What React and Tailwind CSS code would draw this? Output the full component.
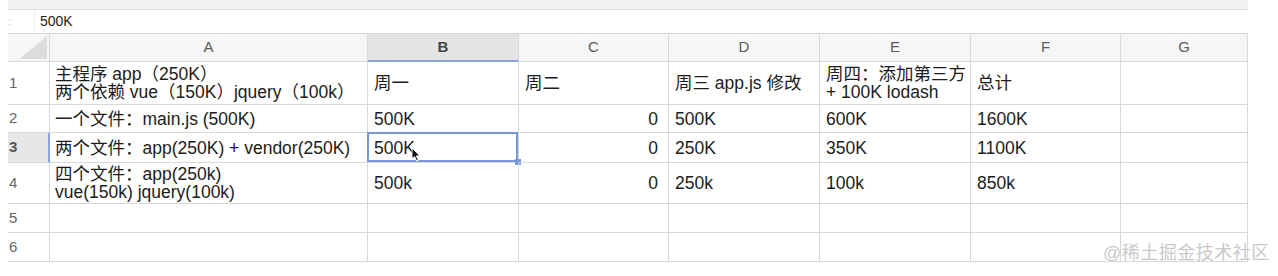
import React from "react";

const COLS = ["A", "B", "C", "D", "E", "F", "G"];

const ROWS = [
  {
    h: "h-[43px]",
    cells: [
      ["主程序 app（250K）", "两个依赖 vue（150K）jquery（100k）"],
      "周一",
      "周二",
      "周三 app.js 修改",
      ["周四：添加第三方", "+ 100K lodash"],
      "总计",
      "",
    ],
  },
  {
    h: "h-[28px]",
    cells: ["一个文件：main.js (500K)", "500K", "0", "500K", "600K", "1600K", ""],
  },
  {
    h: "h-[30px]",
    selected: true,
    cells: ["两个文件：app(250K) + vendor(250K)", "500K", "0", "250K", "350K", "1100K", ""],
  },
  {
    h: "h-[41px]",
    cells: [["四个文件：app(250k)", "vue(150k) jquery(100k)"], "500k", "0", "250k", "100k", "850k", ""],
  },
  { h: "h-[29px]", cells: ["", "", "", "", "", "", ""] },
  { h: "h-[29px]", cells: ["", "", "", "", "", "", ""] },
];

function Cursor() {
  return (
    <svg className="absolute left-[43px] top-[14px]" width="11" height="15" viewBox="0 0 11 15">
      <path d="M1 1 L1 12 L3.6 9.6 L5.6 14 L7.4 13.2 L5.4 8.9 L9 8.9 Z" fill="#111" stroke="#fff" strokeWidth="1" strokeLinejoin="round" />
    </svg>
  );
}

function Cell({ value, colIdx, row, rowIdx }) {
  const isSelected = row.selected && colIdx === 1;
  const rightAlign = colIdx === 2 && rowIdx > 0 && value !== "";
  const lines = Array.isArray(value) ? value : [value];
  return (
    <div
      className={`relative flex items-center border-r border-b border-[#d8d8d8] ${row.h} ${
        rightAlign ? "justify-end pr-[10px]" : colIdx === 0 ? "pl-[5px]" : "pl-[6px]"
      }`}
    >
      <div className="leading-[18px] whitespace-nowrap">
        {lines.map((l, i) => (
          <div key={i}>{l}</div>
        ))}
      </div>
      {isSelected && (
        <>
          <div className="absolute -left-[1px] -top-[1px] right-0 bottom-0 border-2 border-[#7896da]" />
          <div className="absolute -right-[3px] -bottom-[3px] w-[6px] h-[6px] bg-[#7896da]" />
          <Cursor />
        </>
      )}
    </div>
  );
}

export default function App() {
  return (
    <div
      className="relative w-[1278px] h-[276px] bg-white overflow-hidden text-[#1c1c1c]"
      style={{ fontFamily: '"Liberation Sans", "Noto Sans CJK SC", sans-serif' }}
    >
      <div className="ml-[8px] w-[1240px]">
        {/* toolbar edge */}
        <div className="h-[10px] bg-[#f1f1f1] border-b border-[#dedede]" />

        {/* formula bar */}
        <div className="h-[24px] flex items-center border-b border-[#d8d8d8] bg-white">
          <div className="w-[27px] h-full border-r border-[#ececec] flex items-center text-[11px] text-[#c4c4c4]">
            :
          </div>
          <span className="ml-[5px] text-[14px]">500K</span>
        </div>

        {/* sheet */}
        <div className="grid grid-cols-[42px_318px_151px_150px_151px_151px_150px_127px] text-[17.5px]">
          {/* header row */}
          <div className="relative h-[28px] border-r border-b border-[#d8d8d8] bg-[#f6f6f6]">
            <svg className="absolute right-[2px] bottom-[2px]" width="28" height="23" viewBox="0 0 28 23">
              <path d="M28 0 L28 23 L0 23 Z" fill="#dcdcdc" />
            </svg>
          </div>
          {COLS.map((c) => (
            <div
              key={c}
              className={`h-[28px] flex items-center justify-center border-r text-[15px] ${
                c === "B"
                  ? "bg-[#e4e4e4] border-b-2 border-b-[#87a3e0] border-r-[#d8d8d8] font-bold text-[#444]"
                  : "bg-[#f6f6f6] border-b border-[#d8d8d8] text-[#5a5a5a]"
              }`}
            >
              {c}
            </div>
          ))}

          {ROWS.map((row, ri) => (
            <React.Fragment key={ri}>
              <div
                className={`flex items-center pl-[1px] border-b text-[15px] ${row.h} ${
                  row.selected
                    ? "bg-[#e6e6e6] border-r-2 border-r-[#87a3e0] border-b-[#d8d8d8] text-[#555] font-bold"
                    : "bg-white border-r border-[#d8d8d8] text-[#666]"
                }`}
              >
                {ri + 1}
              </div>
              {row.cells.map((v, ci) => (
                <Cell key={ci} value={v} colIdx={ci} row={row} rowIdx={ri} />
              ))}
            </React.Fragment>
          ))}
        </div>
      </div>

      {/* watermark */}
      <div className="absolute left-[1103px] top-[240px] text-[18px] text-[#c9c9c9] tracking-[0.5px]">
        @稀土掘金技术社区
      </div>
    </div>
  );
}
